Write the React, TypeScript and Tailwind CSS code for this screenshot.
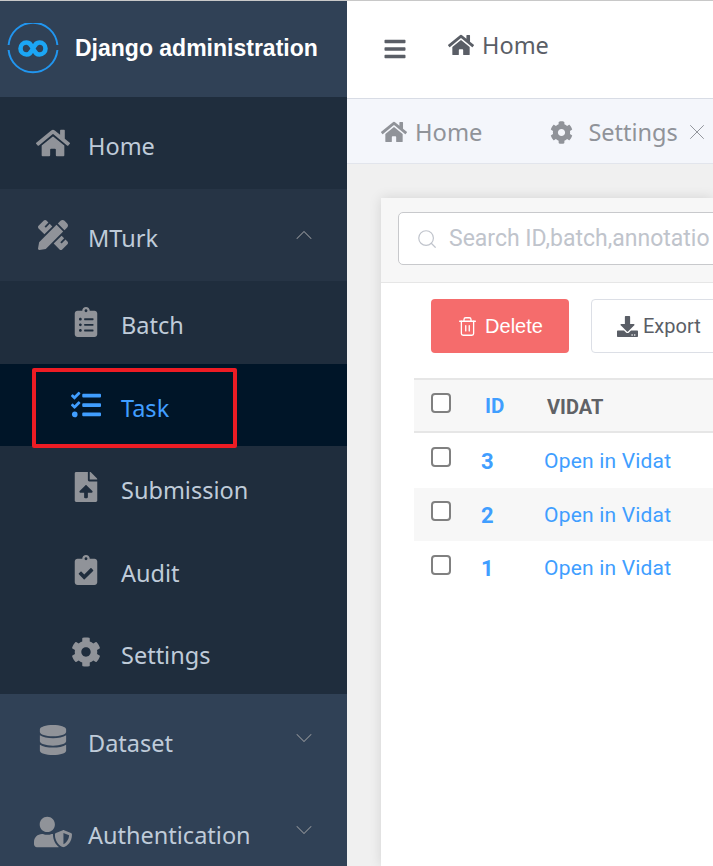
import React from "react";
import { FaHome, FaPencilRuler, FaClipboardList, FaTasks, FaFileUpload, FaClipboardCheck, FaCog, FaDatabase, FaUserShield, FaBars, FaDownload } from "react-icons/fa";
import { ChevronUp, ChevronDown, Search, Trash2, X } from "lucide-react";

const noto = "font-['Noto_Sans',sans-serif]";

function Logo() {
  return (
    <svg width="52" height="52" viewBox="0 0 52 52" fill="none">
      <path d="M50.400 22A24.500 24.500 0 0 0 1.600 22M1.600 27A24.500 24.500 0 0 0 50.400 27" stroke="#2196f0" strokeWidth="2" />
      <path d="M26 25.500C23.500 21.500 23 19.500 19.500 19.500a6 6 0 0 0 0 12C23 31.500 23.500 29.500 26 25.500C28.500 21.500 29 19.500 32.500 19.500a6 6 0 0 1 0 12C29 31.500 28.500 29.500 26 25.500" stroke="#1ba6f5" strokeWidth="4.600" />
    </svg>
  );
}

function TopItem({ icon, label, bg, chevron }: { icon: React.ReactNode; label: string; bg: string; chevron?: "up" | "down" }) {
  return (
    <div className={`h-[92px] ${bg} flex items-center pl-[34px] relative shrink-0`}>
      <div className="w-[38px] flex justify-center text-[#909399]">{icon}</div>
      <span className={`ml-[16px] mt-[8px] text-[23.500px] text-[#bfcbd9] ${noto}`}>{label}</span>
      {chevron === "up" && <ChevronUp size={28} strokeWidth={0.9} className="absolute right-[29px] top-[32px] text-[#909399]" />}
      {chevron === "down" && <ChevronDown size={28} strokeWidth={0.9} className="absolute right-[29px] top-[30px] text-[#909399]" />}
    </div>
  );
}

function SubItem({ icon, label, active }: { icon: React.ReactNode; label: string; active?: boolean }) {
  return (
    <div className={`h-[82.500px] shrink-0 flex items-center pl-[68px] ${active ? "bg-[#001528]" : "bg-[#1f2d3d]"}`}>
      <div className={`w-[36px] flex justify-center ${active ? "text-[#409eff]" : "text-[#909399]"}`}>{icon}</div>
      <span className={`ml-[17px] mt-[7px] text-[23.500px] ${noto} ${active ? "text-[#409eff]" : "text-[#bfcbd9]"}`}>{label}</span>
    </div>
  );
}

function Sidebar() {
  return (
    <aside className="w-[347px] shrink-0 bg-[#304156] flex flex-col overflow-hidden">
      <div className="h-[96px] shrink-0 bg-[#304156] flex items-center pl-[7px]">
        <Logo />
        <span className="ml-[16px] -mt-[2px] text-[23px] font-bold text-white font-['Liberation_Sans',sans-serif]">Django administration</span>
      </div>
      <TopItem icon={<FaHome size={34} />} label="Home" bg="bg-[#1f2d3d]" />
      <TopItem icon={<FaPencilRuler size={30} />} label="MTurk" bg="bg-[#263445]" chevron="up" />
      <SubItem icon={<FaClipboardList size={30} />} label="Batch" />
      <SubItem icon={<FaTasks size={30} />} label="Task" active />
      <SubItem icon={<FaFileUpload size={30} />} label="Submission" />
      <SubItem icon={<FaClipboardCheck size={30} />} label="Audit" />
      <SubItem icon={<FaCog size={30} />} label="Settings" />
      <TopItem icon={<FaDatabase size={30} />} label="Dataset" bg="bg-[#304156]" chevron="down" />
      <TopItem icon={<FaUserShield size={38} />} label="Authentication" bg="bg-[#304156]" chevron="down" />
    </aside>
  );
}

function Checkbox() {
  return <span className="block w-[20px] h-[20px] rounded-[4px] border-2 border-[#808080] bg-white" />;
}

function Row({ id, striped, h }: { id: number; striped?: boolean; h: string }) {
  return (
    <div className={`${h} flex items-center ${striped ? "bg-[#f7f7f7]" : "bg-white"}`}>
      <div className="w-[52px] pl-[17px] -mt-[7px]"><Checkbox /></div>
      <div className="w-[78px] pl-[15px] mt-[1px] text-[#409eff] text-[22px] font-bold font-['Roboto',sans-serif]">{id}</div>
      <div className="mt-[2px] text-[#409eff] text-[21px] tracking-[0.2px] font-['Roboto',sans-serif] whitespace-nowrap">Open in Vidat</div>
    </div>
  );
}

function Main() {
  return (
    <main className="flex-1 min-w-0 flex flex-col bg-[#f0f0f0] overflow-hidden">
      <header className="h-[98px] shrink-0 bg-white border-b border-[#d8dce5] flex items-start">
        <FaBars size={24} className="ml-[36px] mt-[36px] text-[#5a5e66]" />
        <div className="ml-[41px] mt-[29px] flex items-center text-[#5a5e66]">
          <FaHome size={26} />
          <span className={`ml-[8px] text-[23.500px] leading-[30px] ${noto}`}>Home</span>
        </div>
      </header>
      <div className="h-[65px] shrink-0 pt-[2px] bg-[#f4f6fb] border-b border-[#e2e5ec] flex items-center text-[#909399] whitespace-nowrap">
        <FaHome size={26} className="ml-[34px]" />
        <span className={`ml-[8px] mt-[2px] text-[23.700px] ${noto}`}>Home</span>
        <FaCog size={23} className="ml-[68px]" />
        <span className={`ml-[15px] mt-[2px] text-[23.500px] ${noto}`}>Settings</span>
        <X size={26} strokeWidth={0.9} className="ml-[6px] shrink-0" />
      </div>
      <div className="flex-1 pt-[34px] pl-[34px] min-h-0">
        <div className="h-full bg-white shadow-[0_0_12px_rgba(0,0,0,0.12)] overflow-hidden">
          <div className="h-[85px] bg-[#f7f7f7] border-b border-[#e6e6e6] pt-[14px] pl-[17px]">
            <div className="h-[53px] w-[400px] bg-white border border-[#c8c9cc] rounded-[5px] flex items-center pl-[17px]">
              <Search size={22} strokeWidth={1.3} className="text-[#c0c4cc] shrink-0" />
              <span className="ml-[11px] mt-[2px] text-[23px] text-[#c0c4cc] whitespace-nowrap font-['Roboto',sans-serif]">Search ID,batch,annotatio</span>
            </div>
          </div>
          <div className="h-[95px] pt-[16px] pl-[50px] flex items-start gap-[22px]">
            <div className="w-[138px] h-[54px] shrink-0 rounded-[4px] bg-[#f56c6c] flex items-center justify-center text-white">
              <Trash2 size={21} strokeWidth={1.5} />
              <span className="ml-[7px] text-[20px] font-['Liberation_Sans',sans-serif]">Delete</span>
            </div>
            <div className="w-[140px] h-[54px] shrink-0 rounded-[4px] bg-white border border-[#dcdfe6] flex items-center pl-[25px] text-[#5a5e66]">
              <FaDownload size={21} />
              <span className="ml-[5px] text-[20px] font-['Roboto',sans-serif]">Export</span>
            </div>
          </div>
          <div className="ml-[33px]">
            <div className="h-[55px] bg-[#f7f7f7] border-y-2 border-[#e6e6e6] flex items-center">
              <div className="w-[52px] pl-[17px] -mt-[5px]"><Checkbox /></div>
              <div className="w-[81px] pl-[19px] mt-[2px] text-[#409eff] text-[20.500px] font-bold font-['Roboto',sans-serif]">ID</div>
              <div className="mt-[2px] text-[#606266] text-[20px] font-bold font-['Roboto',sans-serif]">VIDAT</div>
            </div>
            <Row id={3} h="h-[55px]" />
            <Row id={2} striped h="h-[53px]" />
            <Row id={1} h="h-[54px]" />
          </div>
        </div>
      </div>
    </main>
  );
}

export default function App() {
  return (
    <div className="relative w-[713px] h-[866px] overflow-hidden border-t border-[#c8c8c8] flex bg-white">
      <Sidebar />
      <Main />
      <div className="absolute left-[32px] top-[367px] w-[205px] h-[80px] border-[4px] border-[#ed1c24] rounded-[2px]" />
    </div>
  );
}
